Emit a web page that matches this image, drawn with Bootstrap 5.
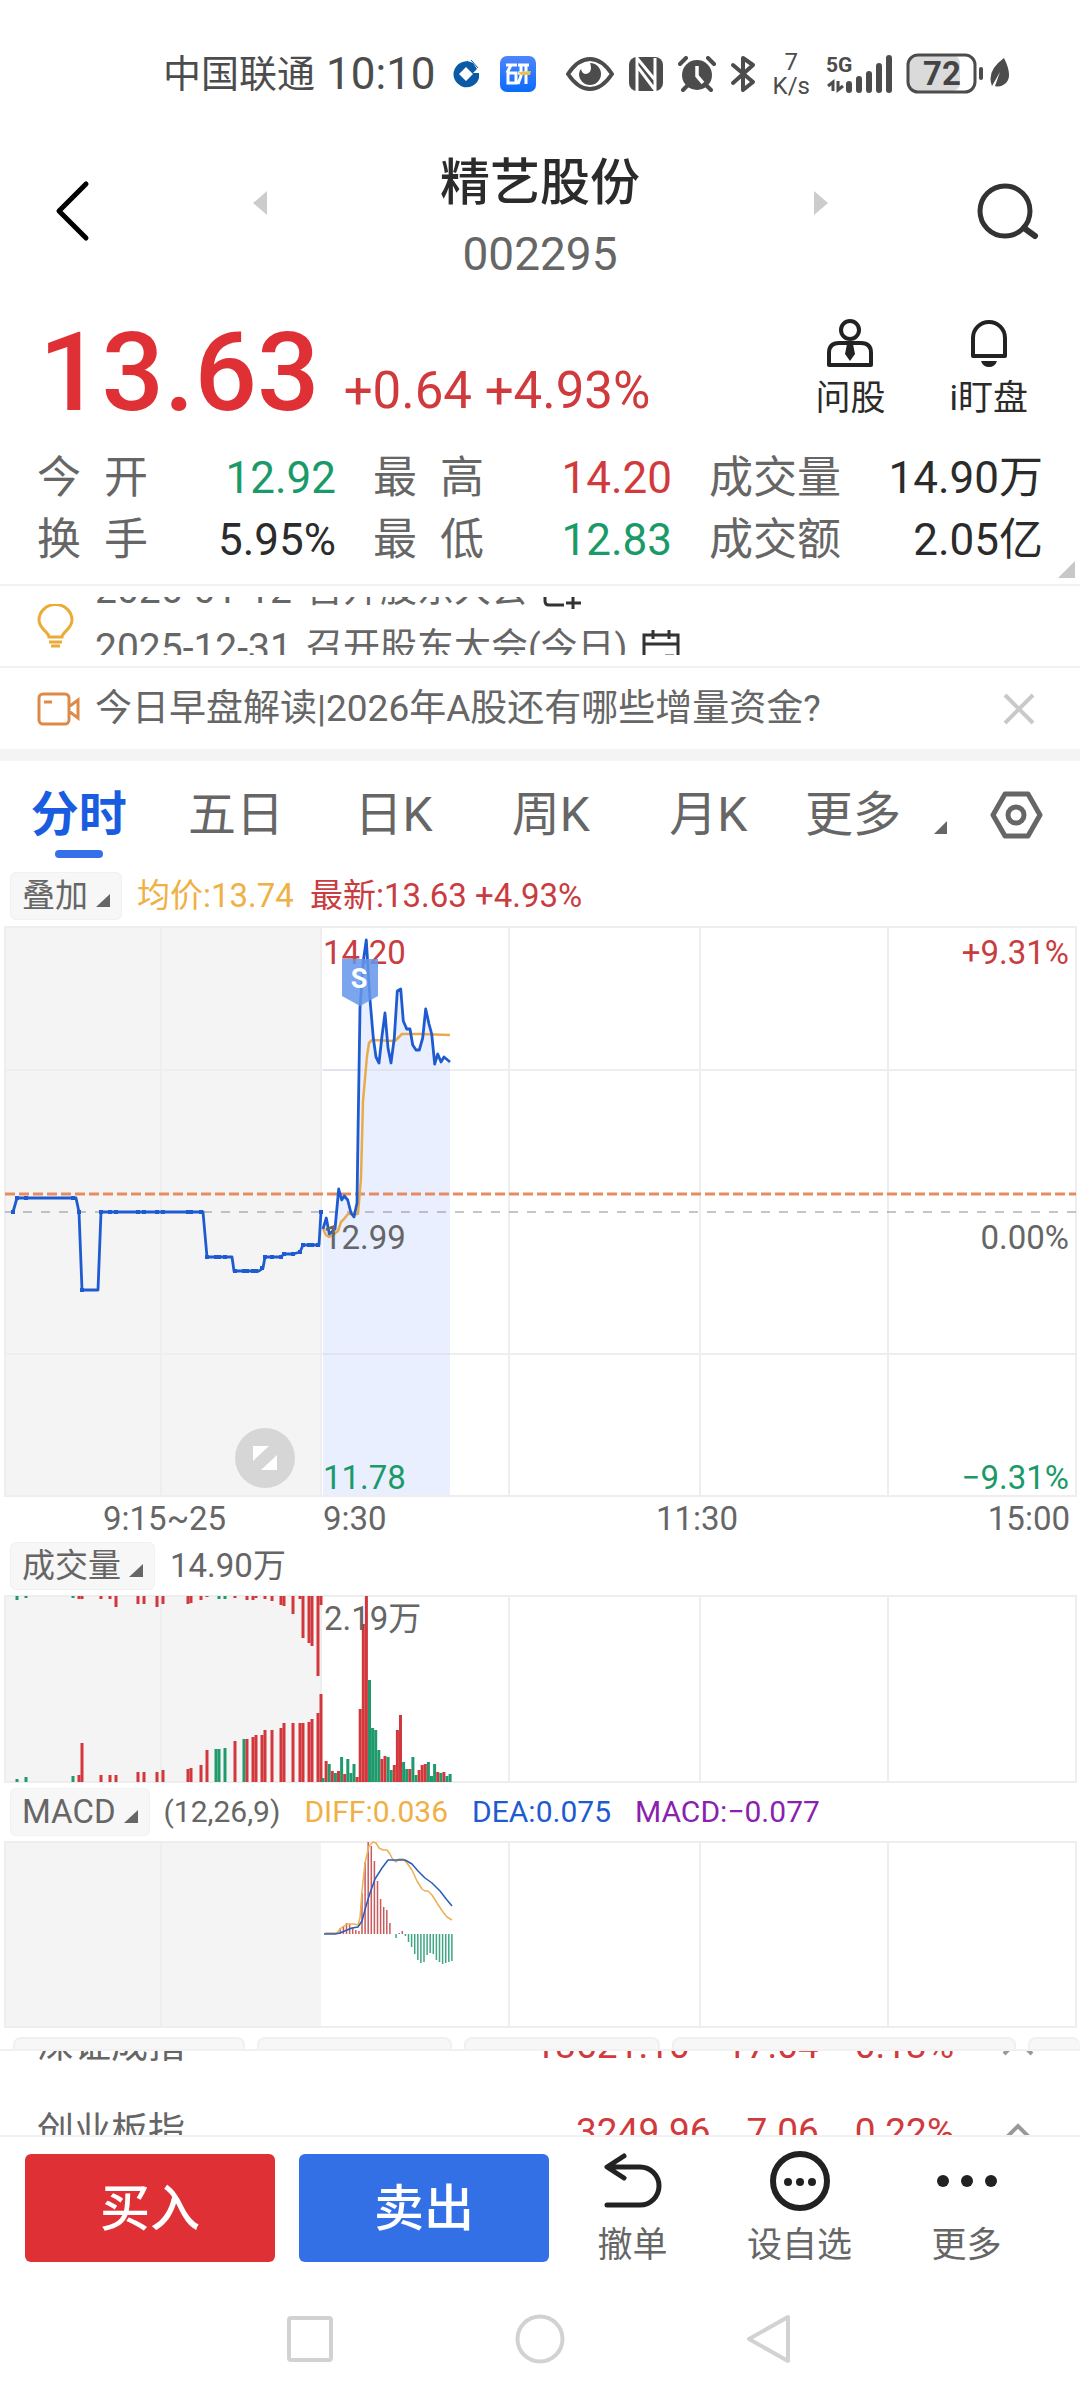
<!DOCTYPE html>
<html lang="zh-CN">
<head>
<meta charset="utf-8">
<meta name="viewport" content="width=device-width, initial-scale=1">
<title>精艺股份 002295</title>
<link href="https://cdn.jsdelivr.net/npm/bootstrap@5.3.0/dist/css/bootstrap.min.css" rel="stylesheet">
<style>
:root{--up:#df3135;--up-soft:#d13a3c;--down:#1b9a69;--ink:#2b2b2b;--mute:#666;--blue:#1f5bd0;--amber:#efb045;--line:#f1f1f1}
body{font-family:Roboto,"Noto Sans CJK SC",sans-serif;color:var(--ink);background:#fff;overflow-x:hidden}
svg{display:block;flex:none}
button,a{color:inherit;text-decoration:none}
.plain{border:0;background:none;padding:0;color:inherit}
.up{color:var(--up-soft)}.down{color:var(--down)}.mute{color:var(--mute)}
.statusbar{padding:48px 69px 0 163px;height:100px;color:#4c4c4c;font-size:38px;line-height:52px}
.clock{font-size:44px;margin-left:11px}
.rate{font-size:24px;line-height:24px;text-align:center}
.topbar{padding:34px 41px 0}
.side{width:62px}
.name{font-size:50px;line-height:66px;font-weight:500;margin:0;padding:16px 24px 4px}
.code{font-size:46px;line-height:68px}
.quote{padding:29px 52px 0 39px}
.price{font-size:110px;line-height:112px;font-weight:500;color:var(--up)}
.change{font-size:51px;line-height:60px;margin:0 0 8px 24px}
.tool{font-size:35px;line-height:44px;font-weight:500;gap:64px}
.stats{display:grid;grid-template-columns:299fr 299fr 334fr;column-gap:37px;padding:18px 37px 13px;font-size:44px;line-height:62px;border-bottom:2px solid var(--line)}
.stats dt{font-weight:400;color:var(--mute);min-width:111px}
.stats dd{margin:0}
.corner{right:5px;bottom:6px}
.ticker{padding:11px 37px 11px;border-bottom:2px solid var(--line)}
.feed{font-size:37px;line-height:58px;color:var(--mute)}
.feed time{font-size:39px;margin-right:14px}
.feed a svg{margin-left:14px}
.window{height:58px;overflow:hidden;margin-left:21px}
.reel{margin-top:-36px}
.news{padding:0 44px 0 37px;line-height:81px}
.news a{margin-left:15px}
.band{height:12px;background:#f4f4f4}
.tabs{padding:19px 37px 0 0;font-size:48px;line-height:70px;color:var(--mute)}
.tabs button{flex:1 1 0}
.tabs .now{color:#1a5ce0;font-weight:700}
.tabs .now::after{content:"";display:block;width:48px;height:8px;border-radius:4px;background:#3570e8;margin:0 auto}
.tabs .more{flex:0 0 160px;padding-left:18px}
.tabs .gear{flex:0 0 96px;padding-top:11px}
.legend{font-size:33px;line-height:48px;padding:6px 0 0 10px;color:var(--mute);white-space:nowrap}
.overlay{padding-top:14px}
.chip{font-size:33px;line-height:46px;background:#f7f7f7;border:1px solid #f1f1f1;border-radius:6px;padding:0 11px;color:var(--mute)}
.chip + span{margin-left:15px}
.macd{font-size:30px;gap:24px;padding-top:0}
.macd .chip + span{margin-left:-10px}
.chart{width:100%;height:auto}
.chart text{font-size:33px;fill:#666}
.grid-lines{stroke:#eee;stroke-width:2;fill:none}
.strip{height:12px;overflow:hidden;gap:12px;padding-left:13px}
.strip span{height:40px;background:#f7f7f7;border:2px solid #f0f0f0;border-radius:8px}
.indices{height:88px;overflow:hidden;border:solid var(--line);border-width:2px 0;font-size:37px;line-height:86px}
.indices-reel{margin-top:-48px}
.indices a{padding:0 46px 0 37px}
.nums{gap:36px;margin-right:48px}
.dock{padding:17px 30px 0 25px;gap:24px}
.trade{flex:0 0 250px;height:108px;border:0;border-radius:6px;color:#fff;font-size:50px;font-weight:500;line-height:108px}
.buy{background:var(--up)}.sell{background:#3370e6}
.acts{flex:1;margin-left:-24px;font-size:35px;line-height:40px;color:var(--mute)}
.acts button{flex:1 1 0}
.acts svg{margin:-3px auto 15px}
.sysnav{gap:180px;padding:48px 0 35px}
</style>
<script src="https://cdn.jsdelivr.net/npm/bootstrap@5.3.0/dist/js/bootstrap.bundle.min.js"></script>
</head>
<body>
<div class="statusbar d-flex align-items-center">
  <span>中国联通</span><span class="clock">10:10</span>
  <svg class="ms-3" width="28" height="28" viewBox="0 0 28 28"><path d="M27 18A13 13 0 1 1 21 3l4 6-4 4H27M14 7l-7 7 7 7 7-7z" fill="#0b5aa6" fill-rule="evenodd"/><path d="M15 1l7 6M19 0l7 8" stroke="#0b5aa6" stroke-width="1"/></svg>
  <svg width="36" height="36" viewBox="0 0 36 36" style="margin-left:20px"><defs><linearGradient id="app" x2="0" y2="1"><stop stop-color="#4f85fb"/><stop offset="1" stop-color="#0a6bfb"/></linearGradient></defs><rect width="36" height="36" rx="7" fill="url(#app)"/><path d="M6 9h11M11 9L7 17M8 17h8v10H8zM18 9h11M21 9v11l-3 8M26 9v19M18 17h11" stroke="#fff" stroke-width="3" fill="none"/><path d="M18 16l13-1-1 4-9 0z" fill="#e8c349"/></svg>
  <svg width="48" height="34" viewBox="0 0 48 34" style="margin-left:30px"><path d="M2 17Q12 2 24 2T46 17Q36 32 24 32T2 17Z" fill="none" stroke="#4c4c4c" stroke-width="4"/><path d="M24 6a11 11 0 1 1-11 11q0-3 2-5 1 5 5 5 5-1 5-6 0-3-1-5z" fill="#4c4c4c"/></svg>
  <svg width="34" height="34" viewBox="0 0 34 34" style="margin-left:15px"><rect width="34" height="34" rx="8" fill="#4c4c4c"/><path d="M8 34V1l18 22V6M8 9l18 24V1" stroke="#fff" stroke-width="3" fill="none"/></svg>
  <svg width="38" height="36" viewBox="0 0 38 36" style="margin-left:15px"><circle cx="19" cy="19" r="15" fill="#4c4c4c"/><path d="M2 8l6-6M36 8l-6-6M5 34l5-5M33 34l-5-5" stroke="#4c4c4c" stroke-width="4" stroke-linecap="round"/><path d="M19 10v10l6 7" stroke="#fff" stroke-width="3.500" fill="none"/></svg>
  <svg width="26" height="38" viewBox="0 0 26 38" style="margin-left:14px"><path d="M3 10l20 17-10 8V3l10 7L3 28" fill="none" stroke="#4c4c4c" stroke-width="4" stroke-linejoin="round" stroke-linecap="round"/></svg>
  <span class="rate" style="margin-left:17px">7<br>K/s</span>
  <svg width="68" height="40" viewBox="0 0 68 40" style="margin-left:16px"><text x="0" y="18" font-size="21" font-weight="700" fill="#4c4c4c">5G</text><path d="M7 37V28l-5 4M12 27v9l5-4" stroke="#4c4c4c" stroke-width="3" fill="none"/><path d="M23 30v6M33 25v11M43 20v16M53 12v24M63 4v32" stroke="#4c4c4c" stroke-width="6" stroke-linecap="round"/></svg>
  <svg width="78" height="42" viewBox="0 0 78 42" style="margin-left:12px"><rect x="3" y="2" width="51" height="36" rx="8" fill="#dadada"/><rect x="2" y="2" width="67" height="37" rx="10" fill="none" stroke="#4c4c4c" stroke-width="3"/><path d="M75 16v9" stroke="#4c4c4c" stroke-width="4" stroke-linecap="round"/><text x="17" y="32" font-size="33" font-weight="700" fill="#444">72</text></svg>
  <svg width="20" height="32" viewBox="0 0 20 32" style="margin-left:6px"><path d="M14 0q9 18 2 25-6 5-11 3l5-14-8 14Q-4 13 14 0z" fill="#4c4c4c"/></svg>
</div>

<header class="topbar d-flex align-items-center justify-content-between">
  <button class="plain side" aria-label="返回"><svg class="mx-auto" width="36" height="62" viewBox="0 0 36 62"><path d="M32 4L5 31l27 27" fill="none" stroke="#000" stroke-width="5" stroke-linecap="round" stroke-linejoin="round"/></svg></button>
  <button class="plain pb-3" aria-label="上一只"><svg width="14" height="24"><path d="M14 0v24L0 12z" fill="#ccc"/></svg></button>
  <div class="text-center"><h1 class="name">精艺股份</h1><div class="code mute">002295</div></div>
  <button class="plain pb-3" aria-label="下一只"><svg width="14" height="24"><path d="M0 0v24l14-12z" fill="#ccc"/></svg></button>
  <button class="plain side" aria-label="搜索"><svg width="62" height="58" viewBox="0 0 62 58"><circle cx="28" cy="29" r="25" fill="none" stroke="#333" stroke-width="5"/><path d="M47 46l11 8" stroke="#333" stroke-width="6" stroke-linecap="round"/></svg></button>
</header>

<section class="quote d-flex justify-content-between align-items-end">
  <div class="d-flex align-items-end"><span class="price">13.63</span><span class="change up">+0.64 +4.93%</span></div>
  <div class="d-flex tool mb-2">
    <button class="plain"><svg class="mx-auto mb-2" width="46" height="50" viewBox="0 0 46 50"><circle cx="23" cy="11" r="9" fill="none" stroke="#222" stroke-width="4"/><path d="M2 46V34q0-10 10-10h22q10 0 10 10v12z" fill="none" stroke="#222" stroke-width="4" stroke-linejoin="round"/><path d="M20 25h6l2 10-5 7-5-7z" fill="#222"/></svg>问股</button>
    <button class="plain"><svg class="mx-auto mb-2" width="38" height="50" viewBox="0 0 38 50"><path d="M3 37V19a16 16 0 0 1 32 0v18z" fill="none" stroke="#222" stroke-width="4" stroke-linejoin="round"/><path d="M11 42h16q-2 6-8 6t-8-6z" fill="#222"/></svg>i盯盘</button>
  </div>
</section>

<section class="stats position-relative">
  <dl class="d-flex justify-content-between m-0"><dt class="d-flex justify-content-between"><span>今</span><span>开</span></dt><dd class="down">12.92</dd></dl>
  <dl class="d-flex justify-content-between m-0"><dt class="d-flex justify-content-between"><span>最</span><span>高</span></dt><dd class="up">14.20</dd></dl>
  <dl class="d-flex justify-content-between m-0"><dt>成交量</dt><dd>14.90万</dd></dl>
  <dl class="d-flex justify-content-between m-0"><dt class="d-flex justify-content-between"><span>换</span><span>手</span></dt><dd>5.95%</dd></dl>
  <dl class="d-flex justify-content-between m-0"><dt class="d-flex justify-content-between"><span>最</span><span>低</span></dt><dd class="down">12.83</dd></dl>
  <dl class="d-flex justify-content-between m-0"><dt>成交额</dt><dd>2.05亿</dd></dl>
  <svg class="corner position-absolute" width="17" height="17"><path d="M17 0v17H0z" fill="#c8c8c8"/></svg>
</section>

<section class="ticker feed d-flex align-items-center">
  <svg width="37" height="44" viewBox="0 0 37 44"><path d="M12 33c0-5-10-8-10-17a16 15 0 0 1 33 0c0 9-10 12-10 17zM12 38h13M14 42h9" fill="none" stroke="#ecaa36" stroke-width="3"/></svg>
  <div class="window">
    <div class="reel">
      <a href="#" class="mute d-flex align-items-center"><time>2026-01-12</time>召开股东大会<svg width="40" height="38" viewBox="0 0 40 38"><path d="M22 34H7q-4 0-4-4V6h34v16M3 15h34M12 1v9M28 1v9M31 25v13M24 32h15" fill="none" stroke="#333" stroke-width="3"/></svg></a>
      <a href="#" class="mute d-flex align-items-center"><time>2025-12-31</time>召开股东大会(今日)<svg width="40" height="38" viewBox="0 0 40 38"><path d="M3 6h34v24q0 4-4 4H7q-4 0-4-4zM3 15h34M12 1v9M28 1v9M24 27h9" fill="none" stroke="#333" stroke-width="3"/></svg></a>
    </div>
  </div>
</section>
<section class="feed news d-flex align-items-center">
  <svg width="43" height="34" viewBox="0 0 43 34"><rect x="2" y="2" width="30" height="30" rx="4" fill="none" stroke="#dd8a49" stroke-width="3"/><path d="M7 10h8M33 14l8-6v18l-8-6" fill="none" stroke="#dd8a49" stroke-width="3"/></svg>
  <a href="#" class="mute">今日早盘解读|2026年A股还有哪些增量资金?</a>
  <button class="plain ms-auto" aria-label="关闭"><svg width="34" height="34"><path d="M3 3l28 28M31 3L3 31" stroke="#c9c9c9" stroke-width="4"/></svg></button>
</section>
<div class="band"></div>

<nav class="tabs d-flex align-items-start">
  <button class="plain now">分时</button><button class="plain">五日</button><button class="plain">日K</button><button class="plain">周K</button><button class="plain">月K</button>
  <button class="plain more d-flex align-items-center justify-content-between">更多<svg width="13" height="13" class="mt-4"><path d="M13 0v13H0z" fill="#666"/></svg></button>
  <button class="plain gear d-flex justify-content-end" aria-label="设置"><svg width="53" height="48" viewBox="0 0 53 48"><path d="M15 3h23l12 21-12 21H15L3 24z" fill="none" stroke="#666" stroke-width="5" stroke-linejoin="round"/><circle cx="26" cy="24" r="8" fill="none" stroke="#666" stroke-width="5"/></svg></button>
</nav>

<div class="legend overlay d-flex align-items-center">
  <button class="chip d-flex align-items-center">叠加<svg class="ms-2 mt-2" width="14" height="13"><path d="M14 0v13H0z" fill="#666"/></svg></button>
  <span style="color:var(--amber)">均价:13.74</span><span class="ms-3" style="color:#c93c3f">最新:13.63 +4.93%</span>
</div>

<svg class="chart" viewBox="0 919 1080 616" role="img" aria-label="分时走势">
  <rect x="5" y="926" width="316" height="569" fill="#f4f4f4"/>
  <path class="grid-lines" d="M5 926H1076V1495H5zM5 1069H1076M5 1353H1076M161 926V1495M321 926V1495M509 926V1495M700 926V1495M888 926V1495"/>
  <path fill="#e9effe" d="M323 1228L326 1217 329 1233 335 1228 339 1188 342 1199 344 1195 348 1199 351 1212 354 1216 357 1202 360 1007 363 960 366 939 370 995 376 1056 379 1062 385 1012 391 1062 397 990 401 988 403 1020 410 1028 416 1049 419 1049 426 1008 435 1063 450 1061V1494H323z"/>
  <path d="M323 1069H450M323 1353H450" stroke="#dfe4ef" stroke-width="2"/>
  <path d="M5 1211H1076" stroke="#8c8c8c" stroke-width="1" stroke-dasharray="9 9"/>
  <path d="M5 1193H1076" stroke="#e58d60" stroke-width="3" stroke-dasharray="10 4"/>
  <text x="323" y="963" style="fill:#c93c3f">14.20</text>
  <text x="1069" y="963" text-anchor="end" style="fill:#c93c3f">+9.31%</text>
  <path d="M323 1228L326 1234 329 1236 333 1234 338 1230 341 1221 344 1218 348 1213 358 1213 361 1177 363 1100 367 1055 369 1042 372 1039 395 1040 402 1033 420 1033 450 1034" fill="none" stroke="#e8ab4c" stroke-width="2.500" stroke-linejoin="round"/>
  <path d="M13 1211L17 1197H76L79 1211 82 1289H98L101 1211H203L207 1256H232L234 1270H259L263 1267 265 1256H281L284 1253H293L300 1251 303 1244H319L321 1211M323 1228L326.300 1217 329.300 1233 335 1228 338.700 1188 341.700 1199 344.300 1195 347.700 1199 351 1212 354 1216 357 1202 358 1133 360 1007 363.300 960 366.300 939 369.700 995 373.300 1037 376 1056 379 1062 382 1035 385 1012 388 1047 391 1062 394.300 1037 397.300 990 400.700 988 403.300 1020 406.700 1028 410 1028 412.700 1044 416 1049H419.300L422.700 1037 425.700 1008 429 1023 431.700 1033 434.700 1063 437.700 1053 441 1061 444 1056 450 1061" fill="none" stroke="#1f5bd0" stroke-width="2.800" stroke-linejoin="round"/>
  <g id="marks" fill="#1f5bd0"></g>
  <path d="M342 958H378V995L360 1005 342 995z" fill="#6496ea" opacity=".85"/>
  <text x="359" y="987" text-anchor="middle" style="fill:#fff;font-size:27px;font-weight:700">S</text>
  <text x="323" y="1248">12.99</text><text x="1069" y="1248" text-anchor="end">0.00%</text>
  <text x="323" y="1488" style="fill:#1b9a69">11.78</text><text x="1069" y="1488" text-anchor="end" style="fill:#1b9a69">−9.31%</text>
  <circle cx="265" cy="1457" r="30" fill="#d6d6d6"/><path d="M253 1445h16l-16 15zM277 1469h-16l16-15z" fill="#fff"/>
  <text x="103" y="1529">9:15~25</text><text x="323" y="1529">9:30</text><text x="697" y="1529" text-anchor="middle">11:30</text><text x="1070" y="1529" text-anchor="end">15:00</text>
</svg>

<div class="legend d-flex align-items-center">
  <button class="chip d-flex align-items-center">成交量<svg class="ms-2 mt-2" width="14" height="13"><path d="M14 0v13H0z" fill="#666"/></svg></button>
  <span>14.90万</span>
</div>
<svg class="chart" viewBox="0 1589 1080 198" role="img" aria-label="成交量">
  <rect x="5" y="1595" width="316" height="186" fill="#f4f4f4"/>
  <path class="grid-lines" d="M5 1595H1076V1781H5zM161 1595V1781M321 1595V1781M509 1595V1781M700 1595V1781M888 1595V1781"/>
  <g id="volume"></g>
  <text x="324" y="1629">2.19万</text>
</svg>

<div class="legend macd d-flex align-items-center">
  <button class="chip d-flex align-items-center">MACD<svg class="ms-2 mt-2" width="14" height="13"><path d="M14 0v13H0z" fill="#666"/></svg></button>
  <span>(12,26,9)</span><span style="color:var(--amber)">DIFF:0.036</span><span style="color:var(--blue)">DEA:0.075</span><span style="color:#8a1fb0">MACD:−0.077</span>
</div>
<svg class="chart" viewBox="0 1835 1080 201" role="img" aria-label="MACD">
  <rect x="5" y="1841" width="316" height="185" fill="#f4f4f4"/>
  <path class="grid-lines" d="M5 1841H1076V2026H5zM161 1841V2026M509 1841V2026M700 1841V2026M888 1841V2026"/>
  <g id="macd"></g>
  <path d="M325 1932L328 1932 337 1932 341 1927 347 1923 354 1923 358 1924 360 1917 362 1890 365 1862 369 1845 373 1841 376 1842 379 1847 383 1849 387 1849 390 1853 393 1859 396 1861 399 1858 403 1858 407 1862 412 1869 417 1880 422 1888 425 1890 428 1890 432 1894 437 1902 443 1911 447 1916 452 1919" fill="none" stroke="#ecb055" stroke-width="1.500" stroke-linejoin="round"/>
  <path d="M324 1933L335 1933 340 1932 347 1929 352 1927 358 1926 362 1920 366 1905 370 1892 375 1878 382 1867 388 1859 397 1859 405 1859 412 1863 418 1870 425 1877 432 1882 440 1890 447 1899 452 1905" fill="none" stroke="#2b5cb8" stroke-width="1.500" stroke-linejoin="round"/>
</svg>

<div class="strip d-flex"><span style="flex:232"></span><span style="flex:194"></span><span style="flex:195"></span><span style="flex:346"></span><span style="flex:51;border-right:0"></span></div>
<section class="indices">
  <div class="indices-reel">
    <a href="#" class="d-flex align-items-center"><span class="mute me-auto">深证成指</span><span class="nums d-flex up"><span>13621.10</span><span>17.04</span><span>0.13%</span></span><svg width="32" height="20"><path d="M2 18L16 4l14 14" fill="none" stroke="#999" stroke-width="4"/></svg></a>
    <a href="#" class="d-flex align-items-center"><span class="mute me-auto">创业板指</span><span class="nums d-flex up"><span>3249.96</span><span>7.06</span><span>0.22%</span></span><svg width="32" height="20"><path d="M2 18L16 4l14 14" fill="none" stroke="#999" stroke-width="4"/></svg></a>
  </div>
</section>

<footer>
  <div class="dock d-flex align-items-start">
    <button class="trade buy">买入</button><button class="trade sell">卖出</button>
    <div class="acts d-flex">
      <button class="plain"><svg width="60" height="60" viewBox="0 0 60 60"><path d="M21 5L4 16l17 11M5 16h32a19 19 0 0 1 0 38H4" fill="none" stroke="#222" stroke-width="5" stroke-linecap="round" stroke-linejoin="round"/></svg>撤单</button>
      <button class="plain"><svg width="60" height="60"><circle cx="30" cy="30" r="27" fill="none" stroke="#222" stroke-width="6"/><g fill="#222"><circle cx="18" cy="31" r="4"/><circle cx="30" cy="31" r="4"/><circle cx="42" cy="31" r="4"/></g></svg>设自选</button>
      <button class="plain"><svg width="60" height="60"><g fill="#222"><circle cx="6" cy="30" r="6"/><circle cx="30" cy="30" r="6"/><circle cx="54" cy="30" r="6"/></g></svg>更多</button>
    </div>
  </div>
  <nav class="sysnav d-flex justify-content-center">
    <button class="plain" aria-label="最近任务"><svg width="50" height="50"><rect x="4" y="4" width="42" height="42" rx="2" fill="none" stroke="#d2d2d2" stroke-width="4"/></svg></button>
    <button class="plain" aria-label="主页"><svg width="50" height="50"><circle cx="25" cy="25" r="22.500" fill="none" stroke="#d2d2d2" stroke-width="4"/></svg></button>
    <button class="plain" aria-label="返回上级"><svg width="50" height="50"><path d="M43 3v44L4 25z" fill="none" stroke="#d2d2d2" stroke-width="4" stroke-linejoin="round"/></svg></button>
  </nav>
</footer>

<script>
const NS='http://www.w3.org/2000/svg', RED='#d1373b', GREEN='#1f9a6c';
function bar(host,x,y,w,h,fill){
  const r=document.createElementNS(NS,'rect');
  for(const [k,v] of Object.entries({x:x-w/2,y,width:w,height:h}))r.setAttribute(k,v);
  if(fill)r.setAttribute('fill',fill);
  host.appendChild(r);
}
const byId=id=>document.getElementById(id);

// call-auction ticks
const ticks={13:1211,17:1197,26:1197,73:1197,79:1211,82:1289,101:1211,110:1211,116:1211,138:1211,144:1211,157:1211,163:1211,188:1211,191:1211,201:1211,207:1256,216:1256,219:1256,225:1256,235:1270,244:1270,247:1270,253:1270,256:1270,262:1267,265:1256,272:1256,281:1256,284:1253,293:1253,300:1251,303:1244,309:1244,312:1244,318:1244,321:1211};
for(const x in ticks)bar(byId('marks'),+x,ticks[x]-2,4,4);

// call auction: unmatched volume hangs from the top, matched volume stands on the base: [x, top, base, down?]
const auction=[[17,4,3,1],[26,2,5,1],[73,2,6,1],[79,3,7],[82,3,39],[101,3,7],[110,3,7],[116,11,7],[138,8,10],[144,8,10],[157,11,10],[163,8,12],[188,8,13],[191,7,14],[201,4,17],[207,1,32],[216,0,33,1],[219,3,33,1],[225,3,34,1],[235,2,41],[244,0,43,1],[247,4,43],[253,4,45],[256,2,47],[262,0,47],[265,3,52],[272,5,52],[281,9,54],[284,10,59],[293,18,59],[300,3,59],[303,42,59],[309,47,60],[312,50,63],[318,80,69],[321,9,88]];
for(const [x,t,b,d] of auction){
  const c=d?GREEN:RED;
  if(t)bar(byId('volume'),x,1595,3,t,c);
  bar(byId('volume'),x,1781-b,3,b,c);
}
// one bar a minute from 9:30, negative = falling minute
const minutes=[-4,21,-18,11,-9,11,-25,8,-23,-9,-18,5,73,158,186,-102,-54,-52,-32,23,26,-25,-12,17,52,67,-20,-13,13,-25,-7,12,17,18,-20,-6,-18,10,-9,10,-6,-8];
minutes.forEach((v,i)=>bar(byId('volume'),323+i*3.1,1781-Math.abs(v),3,Math.abs(v),v<0?GREEN:RED));

const hist=[6,8,11,10,6,4,3,41,72,92,88,73,53,35,27,24,11,0,-4,1,3,-2,-8,-13,-20,-26,-29,-28,-21,-19,-20,-26,-28,-30,-29,-28,-27];
hist.forEach((v,i)=>{if(v)bar(byId('macd'),340.300+i*3.1,v>0?1933-v:1933,1.5,Math.abs(v),v<0?'#3fa582':'#c85a5e')});
</script>
</body>
</html>
